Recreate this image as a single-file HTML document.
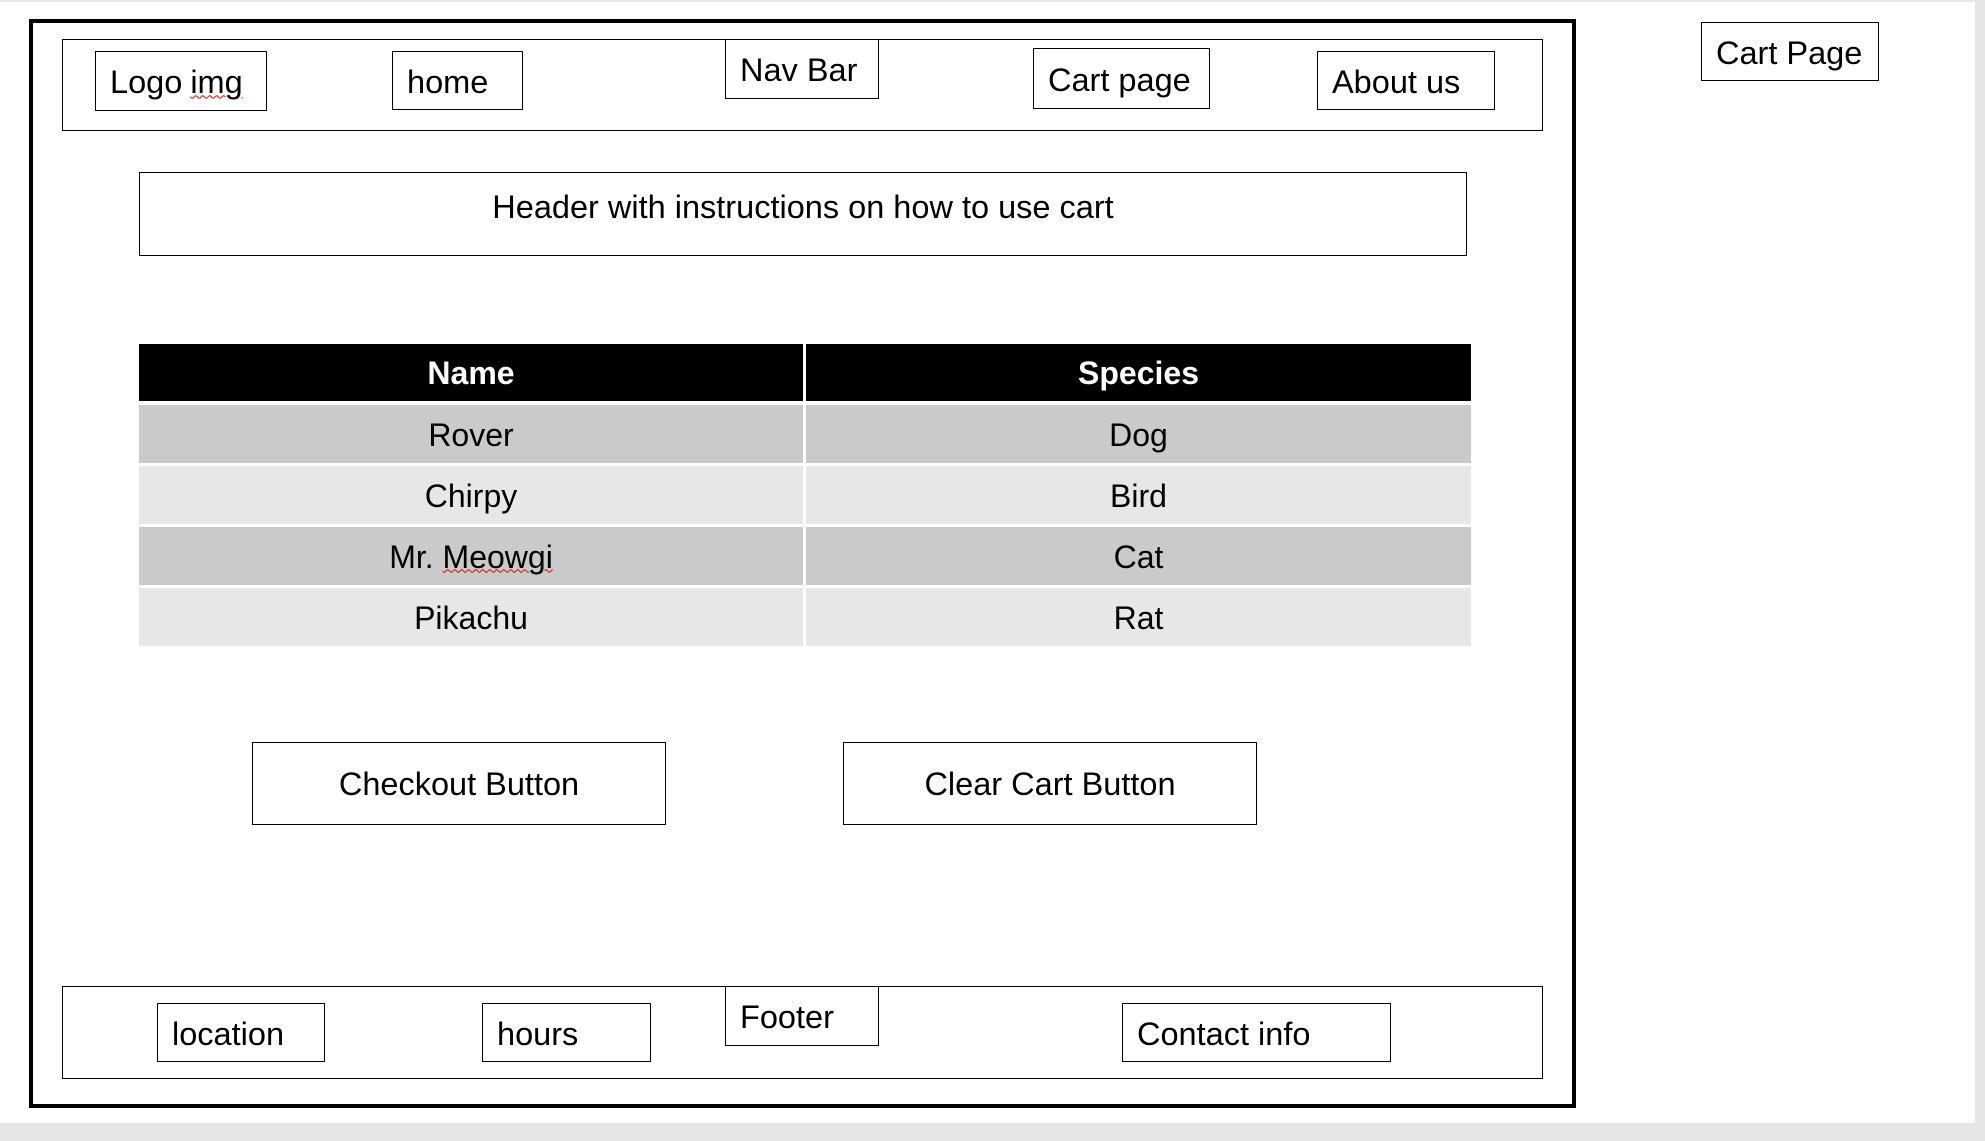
<!DOCTYPE html>
<html><head><meta charset="utf-8"><style>
html,body{margin:0;padding:0;}
body{width:1985px;height:1141px;background:#e6e6e6;position:relative;overflow:hidden;font-family:"Liberation Sans",sans-serif;color:#000;}
.page{position:absolute;left:0;top:2px;width:1975px;height:1121px;background:#fff;}
.b{position:absolute;border:1.5px solid #000;box-sizing:border-box;background:#fff;font-size:32.5px;line-height:1;white-space:nowrap;}
.l{padding-left:14px;display:flex;align-items:center;padding-top:3px;}
.c{display:flex;align-items:center;justify-content:center;padding-top:2px;}
.row{position:absolute;left:139px;width:1332px;display:flex;font-size:32px;}
.row div{flex:none;display:flex;align-items:center;justify-content:center;padding-top:2px;box-sizing:border-box;}
</style></head><body>
<div class="page"></div>
<div style="position:absolute;left:29px;top:19px;width:1547px;height:1089px;border:4px solid #000;box-sizing:border-box;"></div>

<div class="b" style="left:62px;top:39px;width:1481px;height:92px;"></div>
<div class="b l" style="left:95px;top:51px;width:172px;height:60px;">Logo <span style="text-decoration:underline wavy #d00;text-decoration-thickness:1px;margin-left:8px">img</span></div>
<div class="b l" style="left:392px;top:51px;width:131px;height:59px;">home</div>
<div class="b l" style="left:725px;top:39px;width:154px;height:60px;align-items:flex-start;padding-top:14px;">Nav Bar</div>
<div class="b l" style="left:1033px;top:48px;width:177px;height:61px;">Cart page</div>
<div class="b l" style="left:1317px;top:51px;width:178px;height:59px;">About us</div>

<div class="b c" style="left:139px;top:172px;width:1328px;height:84px;align-items:flex-start;padding-top:18px;">Header with instructions on how to use cart</div>

<div class="row" style="top:344px;height:57px;background:#fff;"><div style="width:664px;background:#000;color:#fff;font-weight:bold;">Name</div><div style="width:3px"></div><div style="width:665px;background:#000;color:#fff;font-weight:bold;">Species</div></div>
<div class="row" style="top:405px;height:58px;"><div style="width:664px;background:#cacaca;">Rover</div><div style="width:3px"></div><div style="width:665px;background:#cacaca;">Dog</div></div>
<div class="row" style="top:466px;height:58px;"><div style="width:664px;background:#e7e7e7;">Chirpy</div><div style="width:3px"></div><div style="width:665px;background:#e7e7e7;">Bird</div></div>
<div class="row" style="top:527px;height:58px;"><div style="width:664px;background:#cacaca;">Mr.&nbsp;<span style="text-decoration:underline wavy #d00;text-decoration-thickness:1px">Meowgi</span></div><div style="width:3px"></div><div style="width:665px;background:#cacaca;">Cat</div></div>
<div class="row" style="top:588px;height:58px;"><div style="width:664px;background:#e7e7e7;">Pikachu</div><div style="width:3px"></div><div style="width:665px;background:#e7e7e7;">Rat</div></div>

<div class="b c" style="left:252px;top:742px;width:414px;height:83px;">Checkout Button</div>
<div class="b c" style="left:843px;top:742px;width:414px;height:83px;">Clear Cart Button</div>

<div class="b" style="left:62px;top:986px;width:1481px;height:93px;"></div>
<div class="b l" style="left:157px;top:1003px;width:168px;height:59px;">location</div>
<div class="b l" style="left:482px;top:1003px;width:169px;height:59px;">hours</div>
<div class="b l" style="left:725px;top:986px;width:154px;height:60px;align-items:flex-start;padding-top:14px;">Footer</div>
<div class="b l" style="left:1122px;top:1003px;width:269px;height:59px;">Contact info</div>

<div class="b l" style="left:1701px;top:22px;width:178px;height:59px;">Cart Page</div>
</body></html>
